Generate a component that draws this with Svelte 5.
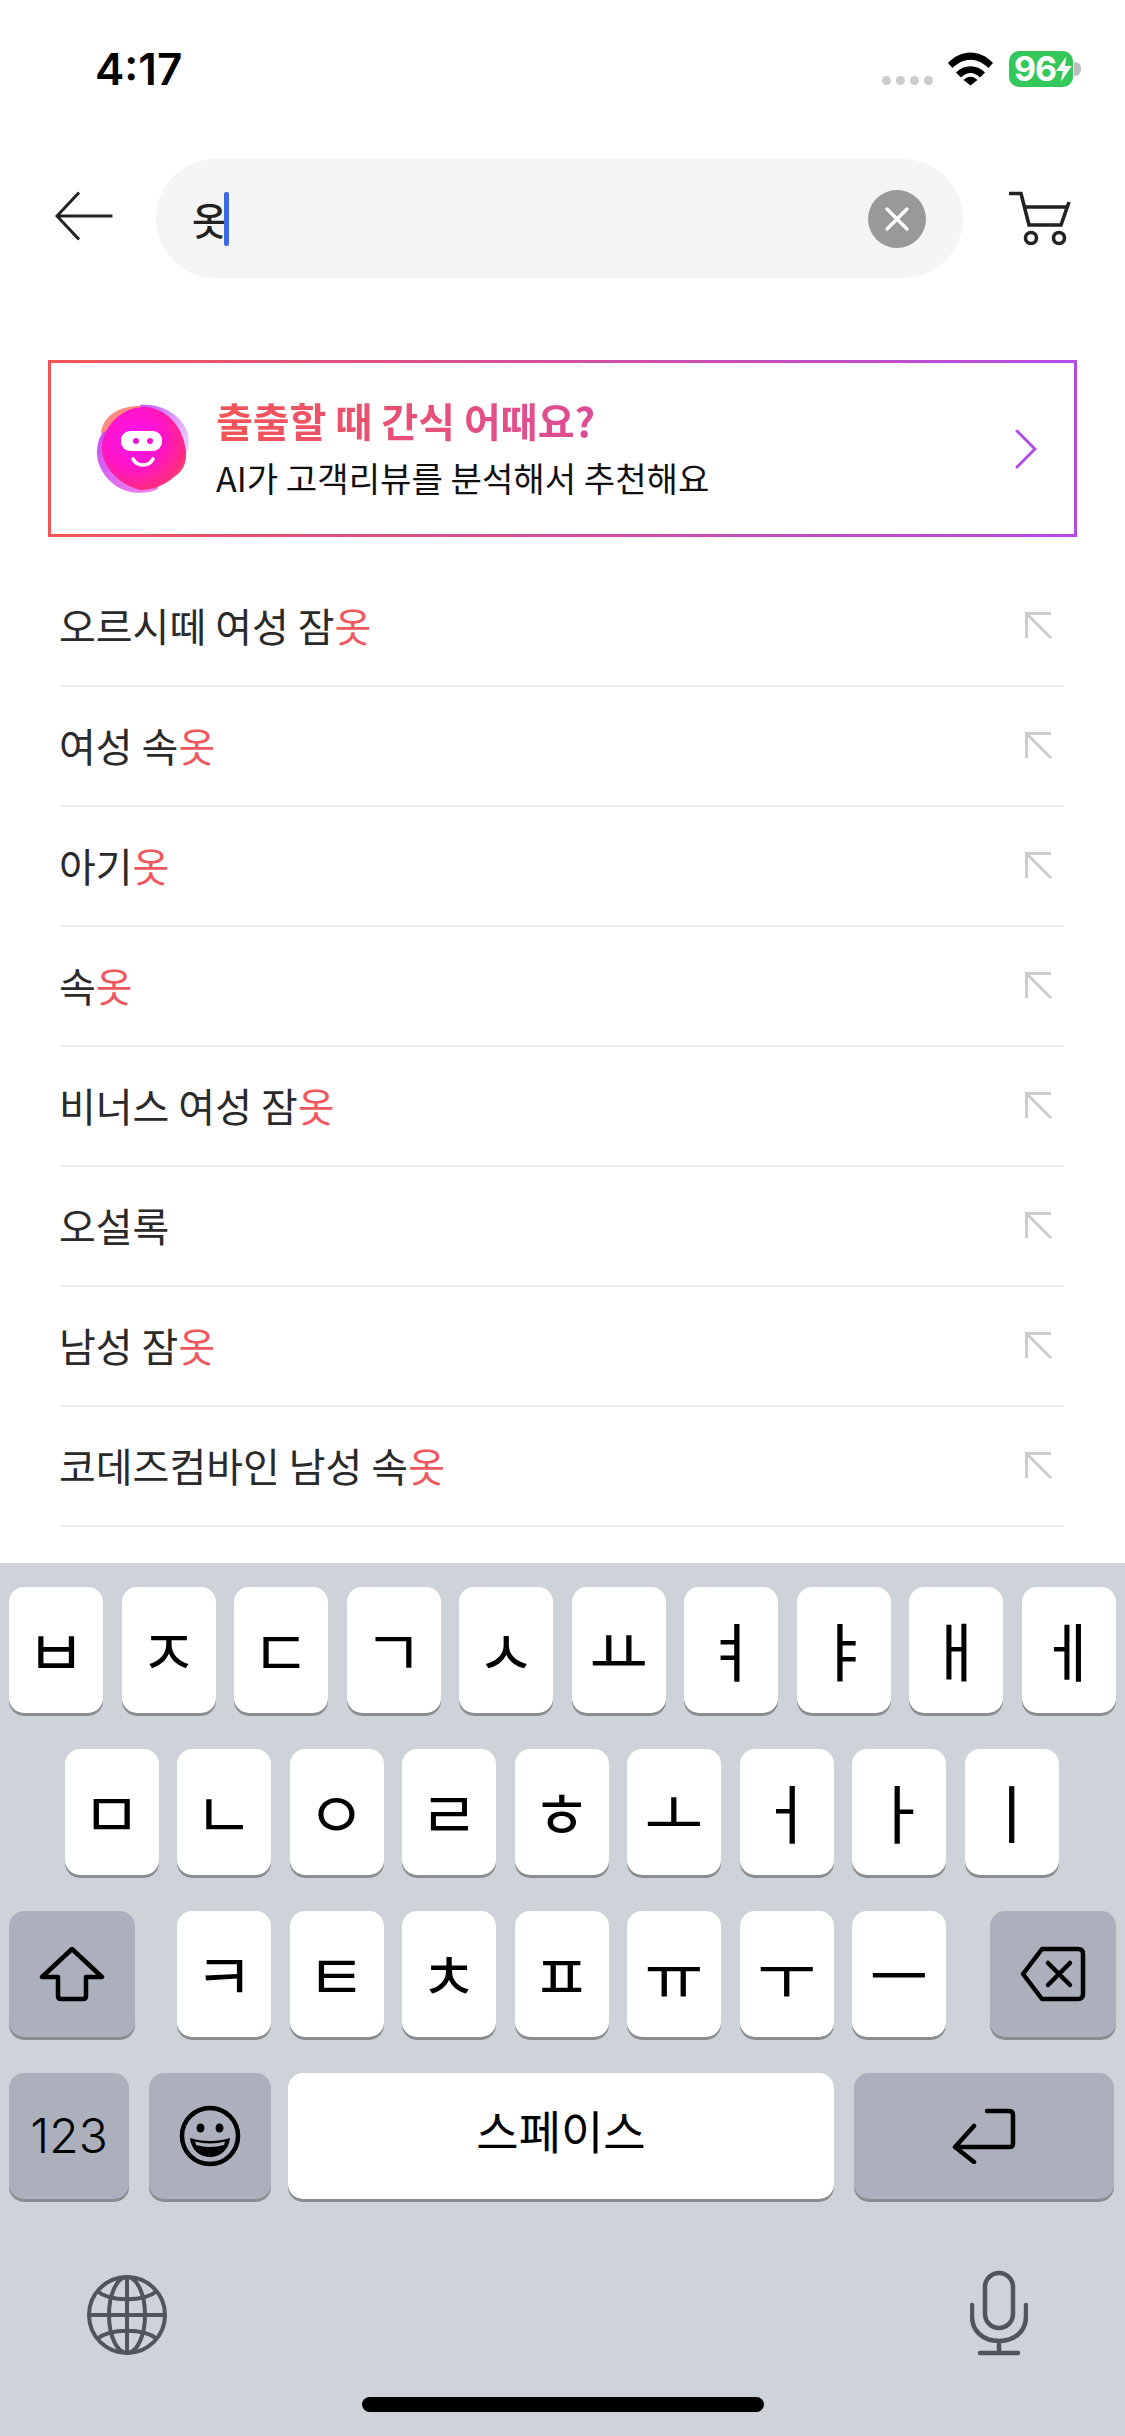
<script>
  const rows = [
    ['오르시떼 여성 잠', '옷'],
    ['여성 속', '옷'],
    ['아기', '옷'],
    ['속', '옷'],
    ['비너스 여성 잠', '옷'],
    ['오설록', ''],
    ['남성 잠', '옷'],
    ['코데즈컴바인 남성 속', '옷']
  ]
  const row1 = ['ㅂ', 'ㅈ', 'ㄷ', 'ㄱ', 'ㅅ', 'ㅛ', 'ㅕ', 'ㅑ', 'ㅐ', 'ㅔ']
  const row2 = ['ㅁ', 'ㄴ', 'ㅇ', 'ㄹ', 'ㅎ', 'ㅗ', 'ㅓ', 'ㅏ', 'ㅣ']
  const row3 = ['ㅋ', 'ㅌ', 'ㅊ', 'ㅍ', 'ㅠ', 'ㅜ', 'ㅡ']
</script>

<div class="screen">
  <div class="status">
    <span class="time">4:17</span>
    <div class="status-right">
      <div class="dots"><i></i><i></i><i></i><i></i></div>
      <svg class="wifi" width="46" height="34" viewBox="0 0 46 34">
        <path d="M0 11 C13 -3 32 -3 45 11 L40.5 16 C29 5 16 5 4.5 16 Z" fill="#000"/>
        <path d="M8 20.5 C16 12 29 12 37 20.5 L32 25.5 C26 19.5 19 19.5 13 25.5 Z" fill="#000"/>
        <path d="M22.5 33.5 L15.5 28 C20 23.5 25 23.5 29.5 28 Z" fill="#000"/>
      </svg>
      <div class="battery">
        <span>96</span>
        <svg width="17" height="26" viewBox="0 0 17 26"><path d="M10.5 0 L0 15 H7 L5 26 L16 10 H9 Z" fill="#fff"/></svg>
      </div>
    </div>
  </div>

  <div class="search-row">
    <svg class="back" width="58" height="50" viewBox="0 0 58 50">
      <path d="M24 1.5 L2 25 L24 48.5 M2 25 H57.5" fill="none" stroke="#222" stroke-width="3"/>
    </svg>
    <div class="pill">
      <span class="query">옷</span>
      <span class="caret"></span>
      <span class="clear">
        <svg width="26" height="26" viewBox="0 0 26 26"><path d="M3 3 L23 23 M23 3 L3 23" stroke="#fff" stroke-width="3.4" stroke-linecap="round"/></svg>
      </span>
    </div>
    <svg class="cart" width="64" height="58" viewBox="0 0 64 58">
      <path d="M2 3.5 H14 L22 35 H54 L62 12 M17 17 H60" fill="none" stroke="#222" stroke-width="3.6"/>
      <circle cx="24" cy="48" r="5.5" fill="none" stroke="#222" stroke-width="3.6"/>
      <circle cx="52" cy="48" r="5.5" fill="none" stroke="#222" stroke-width="3.6"/>
    </svg>
  </div>

  <div class="promo">
    <svg class="bot" width="94" height="90" viewBox="0 0 94 90">
      <defs>
        <radialGradient id="main" cx="0.38" cy="0.38" r="0.72">
          <stop offset="0" stop-color="#ff14f2"/>
          <stop offset="0.5" stop-color="#ff14c8"/>
          <stop offset="0.85" stop-color="#ff2a84"/>
          <stop offset="1" stop-color="#ff4a78"/>
        </radialGradient>
        <linearGradient id="light" x1="0" y1="0" x2="1" y2="0.6">
          <stop offset="0" stop-color="#c04cff"/>
          <stop offset="1" stop-color="#e8ccff"/>
        </linearGradient>
        <linearGradient id="side" x1="0" y1="0" x2="0.8" y2="1">
          <stop offset="0" stop-color="#c84cf8"/>
          <stop offset="1" stop-color="#ec80ec"/>
        </linearGradient>
      </defs>
      <path d="M44 1 C64 -1 86 10 92 30 C95 44 90 54 80 58 C60 62 30 30 44 1 Z" fill="url(#light)"/>
      <path d="M5 28 C8 10 26 1 46 2 C36 12 18 26 8 40 Z" fill="#ff8a82"/>
      <path d="M1 46 C2 34 6 26 14 26 C40 36 60 66 62 85 C50 91 32 90 20 82 C8 74 0 60 1 46 Z" fill="url(#side)"/>
      <path d="M6 42 C8 20 28 2 50 3 C72 5 88 24 90 48 C91 60 86 68 78 73 C68 82 56 86 44 86 C22 80 5 62 6 42 Z" fill="url(#main)"/>
      <rect x="25" y="27" width="41" height="20" rx="9" fill="#fff"/>
      <circle cx="40" cy="37" r="3" fill="#f014d8"/>
      <circle cx="54" cy="37" r="3" fill="#f014d8"/>
      <path d="M37 55 C41 63 53 63 57 55" fill="none" stroke="#fff" stroke-width="3.6" stroke-linecap="round"/>
    </svg>
    <div class="promo-text">
      <div class="promo-title"><span>출출할 때 간식 어때요?</span></div>
      <div class="promo-sub">AI가 고객리뷰를 분석해서 추천해요</div>
    </div>
    <svg class="chevron" width="22" height="40" viewBox="0 0 22 40">
      <path d="M2 2 L20 20 L2 38" fill="none" stroke="#b44ae8" stroke-width="3" stroke-linecap="round"/>
    </svg>
  </div>

  <ul class="list">
    {#each rows as [text, hit]}
      <li>
        <span class="label">{text}<em>{hit}</em></span>
        <svg width="27" height="27" viewBox="0 0 28 28">
          <path d="M1.5 27 V1.5 H27 M1.5 1.5 L27 27" fill="none" stroke="#ccc" stroke-width="3"/>
        </svg>
      </li>
    {/each}
  </ul>

  <div class="keyboard">
    <div class="kb-row">
      {#each row1 as k}<div class="key">{k}</div>{/each}
    </div>
    <div class="kb-row inset">
      {#each row2 as k}<div class="key">{k}</div>{/each}
    </div>
    <div class="kb-row">
      <div class="key dark wide">
        <svg width="66" height="56" viewBox="0 0 66 56">
          <path d="M33 3 L63 31 H47 V50 Q47 53 44 53 H22 Q19 53 19 50 V31 H3 Z" fill="none" stroke="#000" stroke-width="4.5" stroke-linejoin="round"/>
        </svg>
      </div>
      <div class="letters">
        {#each row3 as k}<div class="key">{k}</div>{/each}
      </div>
      <div class="key dark wide">
        <svg width="66" height="56" viewBox="0 0 66 56">
          <path d="M22 3 H58 Q63 3 63 8 V48 Q63 53 58 53 H22 L3 28 Z" fill="none" stroke="#000" stroke-width="4.5" stroke-linejoin="round"/>
          <path d="M28 17 L50 39 M50 17 L28 39" stroke="#000" stroke-width="4.5" stroke-linecap="round"/>
        </svg>
      </div>
    </div>
    <div class="kb-row bottom">
      <div class="key dark num">123</div>
      <div class="key dark emoji">
        <svg width="62" height="62" viewBox="0 0 62 62">
          <circle cx="31" cy="31" r="28" fill="none" stroke="#000" stroke-width="4.5"/>
          <ellipse cx="21.5" cy="23" rx="4" ry="4.6" fill="#000"/>
          <ellipse cx="40.5" cy="23" rx="4" ry="4.6" fill="#000"/>
          <path d="M11 33 C22 37 40 37 51 33 C50 45 41 52 31 52 C21 52 12 45 11 33 Z" fill="#000"/>
          <path d="M16 36.5 C25 39 37 39 46 36.5 L45 40 C36 42.5 26 42.5 17 40 Z" fill="#abb0bc"/>
        </svg>
      </div>
      <div class="key space">스페이스</div>
      <div class="key dark ret">
        <svg width="64" height="56" viewBox="0 0 64 56">
          <path d="M35 3 H57 Q61 3 61 7 V36 Q61 39 57 39 H4 M22 18 L3 39 L22 54" fill="none" stroke="#000" stroke-width="4.5" stroke-linecap="round" stroke-linejoin="round"/>
        </svg>
      </div>
    </div>
    <div class="kb-tools">
      <svg class="globe" width="82" height="82" viewBox="0 0 82 82" fill="none" stroke="#50555c" stroke-width="4">
        <circle cx="41" cy="41" r="38"/>
        <ellipse cx="41" cy="41" rx="18" ry="38"/>
        <path d="M41 3 V79 M3 41 H79 M11 17 C24 28 58 28 71 17 M11 65 C24 54 58 54 71 65"/>
      </svg>
      <svg width="58" height="86" viewBox="0 0 58 86" fill="none" stroke="#50555c" stroke-width="4.5" stroke-linecap="round">
        <rect x="15" y="3" width="28" height="55" rx="14"/>
        <path d="M2 35 V46 C2 62 14 71 29 71 C44 71 56 62 56 46 V35 M29 71 V83 M10 83 H48"/>
      </svg>
    </div>
    <div class="home"></div>
  </div>
</div>

<style>
  :global(body) {
    margin: 0;
    background: #fff;
    font-family: "Noto Sans CJK KR", "Noto Sans", sans-serif;
  }

  .screen {
    width: 1125px;
    height: 2436px;
    display: flex;
    flex-direction: column;
    overflow: hidden;
    background: #fff;
  }

  .status {
    height: 159px;
    flex: none;
    box-sizing: border-box;
    padding: 51px 52px 0 95px;
    display: flex;
    justify-content: space-between;
    align-items: flex-start;
  }
  .time {
    font-family: Inter, sans-serif;
    font-weight: 600;
    font-size: 44px;
    line-height: 36px;
    color: #000;
  }
  .status-right { display: flex; align-items: flex-start; }
  .dots { display: flex; gap: 5px; margin-top: 25px; margin-right: 15px; }
  .dots i { width: 9px; height: 9px; border-radius: 50%; background: #ccc; display: block; }
  .wifi { margin-right: 15px; margin-top: 1px; }
  .battery {
    width: 64px;
    height: 36px;
    background: #34c759;
    border-radius: 10px;
    display: flex;
    align-items: center;
    position: relative;
    padding-left: 5px;
    box-sizing: border-box;
    color: #fff;
    font-family: Inter, sans-serif;
    font-weight: 700;
    font-size: 34px;
    letter-spacing: -1px;
    line-height: 36px;
  }
  .battery::after {
    content: "";
    position: absolute;
    right: -8px;
    top: 11px;
    width: 7px;
    height: 14px;
    border-radius: 0 6px 6px 0;
    background: #bdbdbd;
  }

  .search-row {
    height: 119px;
    flex: none;
    display: flex;
    align-items: center;
    padding-left: 55px;
  }
  .back { margin-right: 43px; margin-top: -5px; }
  .pill {
    width: 807px;
    height: 119px;
    border-radius: 60px;
    background: #f5f5f5;
    display: flex;
    align-items: center;
    box-sizing: border-box;
    padding: 0 37px 0 36px;
  }
  .query { font-size: 38px; font-weight: 500; color: #222; line-height: 54px; }
  .caret { width: 5px; height: 54px; margin-left: -3px; background: #3e6ae1; border-radius: 2px; }
  .clear {
    margin-left: auto;
    width: 58px;
    height: 58px;
    border-radius: 50%;
    background: #999;
    display: flex;
    align-items: center;
    justify-content: center;
  }
  .cart { margin-left: 44px; }

  .promo {
    margin: 82px 48px 0;
    height: 177px;
    flex: none;
    box-sizing: border-box;
    border: 3px solid transparent;
    background: linear-gradient(#fff, #fff) padding-box, linear-gradient(90deg, #f25555, #b44ae8) border-box;
    display: flex;
    align-items: center;
    position: relative;
  }
  .bot { margin-left: 45px; flex: none; }
  .promo-text { margin-left: 26px; margin-top: -3px; flex: 1; }
  .promo-title { font-size: 40px; font-weight: 700; line-height: 54px; }
  .promo-title span {
    display: block;
    background: linear-gradient(90deg, #f25555 0%, #dc4c9c 50%, #b44ae8 120%);
    -webkit-background-clip: text;
    background-clip: text;
    color: transparent;
  }
  .promo-sub { font-size: 34.15px; line-height: 48px; color: #111; margin-top: 6px; }
  .chevron { margin-right: 37px; flex: none; }

  .list {
    list-style: none;
    margin: 30px 61px 0 60px;
    padding: 0;
  }
  .list li {
    height: 120px;
    box-sizing: border-box;
    border-bottom: 2px solid #eee;
    display: flex;
    align-items: center;
    justify-content: space-between;
    padding: 0 12px 2px 0;
  }
  .label { font-size: 40px; color: #2a2a2a; margin-left: -1px; }
  .label em { font-style: normal; color: #f0585f; }

  .keyboard {
    margin-top: auto;
    height: 873px;
    flex: none;
    box-sizing: border-box;
    background: #ced2d9;
    padding-top: 24px;
    position: relative;
  }
  .kb-row {
    display: flex;
    gap: 18.5px;
    height: 126px;
    padding: 0 9px;
    margin-bottom: 36px;
  }
  .kb-row.inset { padding: 0 64.5px; }
  .letters { display: flex; gap: 18.5px; margin: 0 25.5px 0 23.5px; }
  .key {
    width: 94px;
    flex: none;
    height: 126px;
    background: #fff;
    border-radius: 15px;
    box-shadow: 0 3px 0 #8b8c90;
    display: flex;
    align-items: center;
    justify-content: center;
    font-size: 64px;
    line-height: 1;
    color: #000;
    padding-bottom: 4px;
    box-sizing: border-box;
  }
  .key.dark { background: #abb0bc; padding-bottom: 0; }
  .key.wide { width: 126px; }
  .kb-row.bottom { gap: 0; }
  .key.num {
    width: 120px;
    font-family: Inter, sans-serif;
    font-size: 48px;
    font-weight: 350;
  }
  .key.emoji { width: 122px; margin-left: 20px; }
  .key.space { width: 546px; margin-left: 17px; font-size: 46px; padding-bottom: 14px; }
  .key.ret { width: 260px; margin-left: 20px; }
  .kb-tools {
    display: flex;
    justify-content: space-between;
    align-items: flex-start;
    padding: 35px 97px 0 86px;
  }
  .globe { margin-top: 4px; }
  .home {
    position: absolute;
    left: 362px;
    top: 834px;
    width: 402px;
    height: 15px;
    border-radius: 8px;
    background: #000;
  }
</style>
